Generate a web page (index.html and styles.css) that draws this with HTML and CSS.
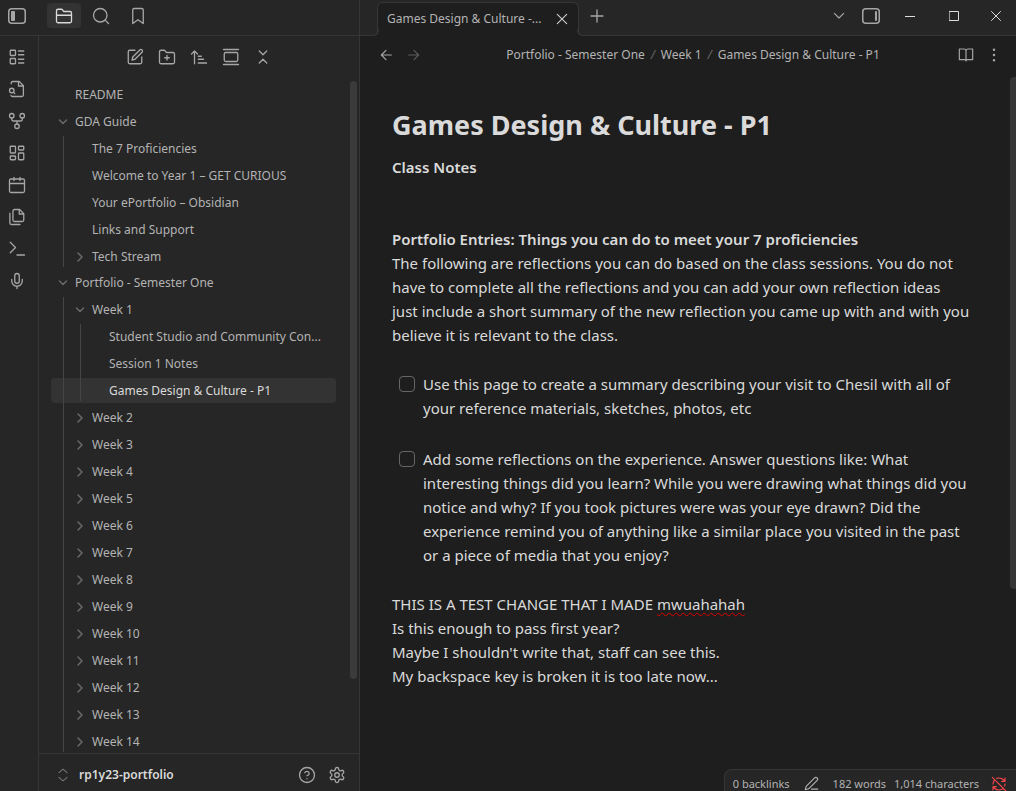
FILE: index.html
```html
<!DOCTYPE html>
<html lang="en">
<head>
<meta charset="utf-8">
<meta name="viewport" content="width=device-width, initial-scale=1">
<title>Games Design &amp; Culture - P1</title>
<link rel="stylesheet" href="styles.css">
</head>
<body>
<svg class="sprite" aria-hidden="true">
  <symbol id="panel-left" viewBox="0 0 18 16"><rect x="0.75" y="0.75" width="16.5" height="14.5" rx="3"/><rect class="solid" x="3" y="3" width="4" height="10" rx="1"/></symbol>
  <symbol id="panel-right" viewBox="0 0 18 16"><rect x="0.75" y="0.75" width="16.5" height="14.5" rx="3"/><rect class="solid" x="13" y="3" width="2" height="10" rx="1"/></symbol>
  <symbol id="folder" viewBox="0 0 24 24"><path d="M2 19V5a2 2 0 0 1 2-2h4.500a2 2 0 0 1 1.600.8L11.500 6H20a2 2 0 0 1 2 2v11a2 2 0 0 1-2 2H4a2 2 0 0 1-2-2zM2 11h20"/></symbol>
  <symbol id="search" viewBox="0 0 24 24"><circle cx="11" cy="11" r="9"/><path d="m22 22-4.500-4.500"/></symbol>
  <symbol id="bookmark" viewBox="0 0 24 24"><path d="m19 22-7-5-7 5V4a2 2 0 0 1 2-2h10a2 2 0 0 1 2 2z"/></symbol>
  <symbol id="layout-list" viewBox="0 0 24 24"><rect x="3" y="3" width="7" height="7" rx="1"/><rect x="3" y="14" width="7" height="7" rx="1"/><path d="M14 4h7M14 9h7M14 15h7M14 20h7"/></symbol>
  <symbol id="file-search" viewBox="0 0 24 24"><path d="M4.300 5V4a2 2 0 0 1 2-2H15l5.500 5.500V20a2 2 0 0 1-2 2H6a2 2 0 0 1-2-1.500M14 2v6h6.500"/><circle cx="5" cy="14" r="3"/><path d="m9 18-1.500-1.500"/></symbol>
  <symbol id="fork" viewBox="0 0 24 24"><circle cx="12" cy="19" r="3"/><circle cx="5" cy="5" r="3"/><circle cx="19" cy="5" r="3"/><path d="M5 8v1.500A2.500 2.500 0 0 0 7.500 12h9A2.500 2.500 0 0 0 19 9.500V8M12 12v4"/></symbol>
  <symbol id="dashboard" viewBox="0 0 24 24"><rect x="3" y="3" width="7" height="9" rx="1"/><rect x="14" y="3" width="7" height="5" rx="1"/><rect x="14" y="12" width="7" height="9" rx="1"/><rect x="3" y="16" width="7" height="5" rx="1"/></symbol>
  <symbol id="calendar" viewBox="0 0 24 24"><rect x="2" y="4" width="20" height="18" rx="2"/><path d="M8 2v4M16 2v4M2 10h20"/></symbol>
  <symbol id="files" viewBox="0 0 24 24"><path d="M15.500 2H8.600a2 2 0 0 0-2 2v12a2 2 0 0 0 2 2H19a2 2 0 0 0 2-2V7.500zM15 2v6h6M2.500 7v13a2 2 0 0 0 2 2H16"/></symbol>
  <symbol id="terminal" viewBox="0 0 24 24"><path d="m3 17 7-7-7-7M12 20h10"/></symbol>
  <symbol id="mic" viewBox="0 0 24 24"><path d="M12 2a3 3 0 0 0-3 3v7a3 3 0 0 0 6 0V5a3 3 0 0 0-3-3zM19 10v2a7 7 0 0 1-14 0v-2M12 19v3"/></symbol>
  <symbol id="edit" viewBox="0 0 24 24"><path d="M12 3H5a2 2 0 0 0-2 2v14a2 2 0 0 0 2 2h14a2 2 0 0 0 2-2v-7M18.400 2.600a2.100 2.100 0 1 1 3 3L12 15l-4 1 1-4z"/></symbol>
  <symbol id="folder-plus" viewBox="0 0 24 24"><path d="M12 10v6M9 13h6M20 21a2 2 0 0 0 2-2V8a2 2 0 0 0-2-2h-7.900a2 2 0 0 1-1.700-.9L9.600 3.900A2 2 0 0 0 7.900 3H4a2 2 0 0 0-2 2v14a2 2 0 0 0 2 2z"/></symbol>
  <symbol id="sort" viewBox="0 0 24 24"><path d="m2 8 4-4 4 4M6 4v17M11 11h4M11 15h7M11 20h11"/></symbol>
  <symbol id="gallery" viewBox="0 0 24 24"><path d="M2 2h20M2 22h20"/><rect x="3" y="6" width="18" height="12" rx="2"/></symbol>
  <symbol id="collapse" viewBox="0 0 24 24"><path d="m7 20 5-5 5 5M7 4l5 5 5-5"/></symbol>
  <symbol id="down" viewBox="0 0 24 24"><path d="m5 8 7 7 7-7"/></symbol>
  <symbol id="right" viewBox="0 0 24 24"><path d="m8 4 8 8-8 8"/></symbol>
  <symbol id="up-down" viewBox="0 0 24 24"><path d="m5 16 7 6 7-6M5 8l7-6 7 6"/></symbol>
  <symbol id="help" viewBox="0 0 24 24"><circle cx="12" cy="12" r="10"/><path d="M9.100 9a3 3 0 0 1 5.800 1c0 2-3 3-3 3M12 17v.1"/></symbol>
  <symbol id="gear" viewBox="0 0 24 24"><path d="M12.220 2h-.44a2 2 0 0 0-2 2v.18a2 2 0 0 1-1 1.730l-.43.25a2 2 0 0 1-2 0l-.15-.08a2 2 0 0 0-2.730.73l-.22.38a2 2 0 0 0 .73 2.730l.15.1a2 2 0 0 1 1 1.720v.51a2 2 0 0 1-1 1.740l-.15.09a2 2 0 0 0-.73 2.730l.22.38a2 2 0 0 0 2.730.73l.15-.08a2 2 0 0 1 2 0l.43.25a2 2 0 0 1 1 1.730V20a2 2 0 0 0 2 2h.44a2 2 0 0 0 2-2v-.18a2 2 0 0 1 1-1.730l.43-.25a2 2 0 0 1 2 0l.15.08a2 2 0 0 0 2.730-.73l.22-.39a2 2 0 0 0-.73-2.730l-.15-.08a2 2 0 0 1-1-1.740v-.5a2 2 0 0 1 1-1.740l.15-.09a2 2 0 0 0 .73-2.730l-.22-.38a2 2 0 0 0-2.730-.73l-.15.08a2 2 0 0 1-2 0l-.43-.25a2 2 0 0 1-1-1.730V4a2 2 0 0 0-2-2z"/><circle cx="12" cy="12" r="3"/></symbol>
  <symbol id="close" viewBox="0 0 24 24"><path d="M5 5l14 14M19 5 5 19"/></symbol>
  <symbol id="plus" viewBox="0 0 24 24"><path d="M12 4v16M4 12h16"/></symbol>
  <symbol id="minimize" viewBox="0 0 10 10"><path d="M0 5.500h10"/></symbol>
  <symbol id="maximize" viewBox="0 0 10 10"><path d="M.5.500h9v9h-9z"/></symbol>
  <symbol id="window-close" viewBox="0 0 10 10"><path d="m.5.500 9 9M9.500.500l-9 9"/></symbol>
  <symbol id="arrow-left" viewBox="0 0 24 24"><path d="m12 19-7-7 7-7M20 12H5"/></symbol>
  <symbol id="arrow-right" viewBox="0 0 24 24"><path d="m12 5 7 7-7 7M4 12h15"/></symbol>
  <symbol id="book" viewBox="0 0 24 24"><path d="M12 6a3 3 0 0 0-3-3H2v16h8a2 2 0 0 1 2 2 2 2 0 0 1 2-2h8V3h-7a3 3 0 0 0-3 3zv15"/></symbol>
  <symbol id="more" viewBox="0 0 24 24"><circle cx="12" cy="4" r="1"/><circle cx="12" cy="12" r="1"/><circle cx="12" cy="20" r="1"/></symbol>
  <symbol id="pen" viewBox="0 0 24 24"><path d="M12 21h10M17 3a2.800 2.800 0 0 1 4 4L7.500 20.500 2 22l1.500-5.500z"/></symbol>
  <symbol id="sync-off" viewBox="0 0 24 24"><path d="M21 8 18.700 5.700A10 10 0 0 0 12 3c-1.200 0-2.300.200-3.400.6M21 12c0 1-.2 2-.5 3M21 3v5h-5M3 16l2.300 2.300A10 10 0 0 0 12 21c2.500 0 4.800-.9 6.400-2.400M3 12c0-2.500.9-4.800 2.600-6.400M8 16H3v5M2 2l20 20"/></symbol>
</svg>

<div class="app">
  <aside class="left">
    <div class="left-top">
      <button class="btn panel-toggle" aria-label="Collapse sidebar"><svg class="panel"><use href="#panel-left"/></svg></button>
      <nav class="side-tabs">
        <button class="btn side-tab active" aria-label="Files"><svg><use href="#folder"/></svg></button>
        <button class="btn side-tab" aria-label="Search"><svg><use href="#search"/></svg></button>
        <button class="btn side-tab" aria-label="Bookmarks"><svg><use href="#bookmark"/></svg></button>
      </nav>
    </div>
    <div class="left-body">
      <nav class="ribbon">
        <button class="btn" aria-label="Outline"><svg><use href="#layout-list"/></svg></button>
        <button class="btn" aria-label="Quick switcher"><svg><use href="#file-search"/></svg></button>
        <button class="btn" aria-label="Graph view"><svg><use href="#fork"/></svg></button>
        <button class="btn" aria-label="Canvas"><svg><use href="#dashboard"/></svg></button>
        <button class="btn" aria-label="Daily note"><svg><use href="#calendar"/></svg></button>
        <button class="btn" aria-label="Templates"><svg><use href="#files"/></svg></button>
        <button class="btn" aria-label="Command palette"><svg><use href="#terminal"/></svg></button>
        <button class="btn" aria-label="Record audio"><svg><use href="#mic"/></svg></button>
      </nav>
      <div class="explorer">
        <div class="actions">
          <button class="btn" aria-label="New note"><svg><use href="#edit"/></svg></button>
          <button class="btn" aria-label="New folder"><svg><use href="#folder-plus"/></svg></button>
          <button class="btn" aria-label="Sort order"><svg><use href="#sort"/></svg></button>
          <button class="btn" aria-label="Reveal current file"><svg><use href="#gallery"/></svg></button>
          <button class="btn" aria-label="Collapse all"><svg><use href="#collapse"/></svg></button>
        </div>
        <div class="tree">
          <ul class="level">
            <li><a class="row" href="#">README</a></li>
            <li><a class="row" href="#"><svg><use href="#down"/></svg>GDA Guide</a>
              <ul class="level nested guide">
                <li><a class="row" href="#">The 7 Proficiencies</a></li>
                <li><a class="row" href="#">Welcome to Year 1 – GET CURIOUS</a></li>
                <li><a class="row" href="#">Your ePortfolio – Obsidian</a></li>
                <li><a class="row" href="#">Links and Support</a></li>
                <li><a class="row" href="#"><svg><use href="#right"/></svg>Tech Stream</a></li>
              </ul>
            </li>
            <li><a class="row" href="#"><svg><use href="#down"/></svg>Portfolio - Semester One</a>
              <ul class="level nested">
                <li><a class="row" href="#"><svg><use href="#down"/></svg>Week 1</a>
                  <ul class="level nested deep">
                    <li><a class="row" href="#">Student Studio and Community Con...</a></li>
                    <li><a class="row" href="#">Session 1 Notes</a></li>
                    <li><a class="row current" href="#">Games Design &amp; Culture - P1</a></li>
                  </ul>
                </li>
                <li><a class="row" href="#"><svg><use href="#right"/></svg>Week 2</a></li>
                <li><a class="row" href="#"><svg><use href="#right"/></svg>Week 3</a></li>
                <li><a class="row" href="#"><svg><use href="#right"/></svg>Week 4</a></li>
                <li><a class="row" href="#"><svg><use href="#right"/></svg>Week 5</a></li>
                <li><a class="row" href="#"><svg><use href="#right"/></svg>Week 6</a></li>
                <li><a class="row" href="#"><svg><use href="#right"/></svg>Week 7</a></li>
                <li><a class="row" href="#"><svg><use href="#right"/></svg>Week 8</a></li>
                <li><a class="row" href="#"><svg><use href="#right"/></svg>Week 9</a></li>
                <li><a class="row" href="#"><svg><use href="#right"/></svg>Week 10</a></li>
                <li><a class="row" href="#"><svg><use href="#right"/></svg>Week 11</a></li>
                <li><a class="row" href="#"><svg><use href="#right"/></svg>Week 12</a></li>
                <li><a class="row" href="#"><svg><use href="#right"/></svg>Week 13</a></li>
                <li><a class="row" href="#"><svg><use href="#right"/></svg>Week 14</a></li>
              </ul>
            </li>
          </ul>
          <div class="thumb tree-thumb"></div>
        </div>
        <footer class="vault">
          <button class="btn vault-name"><svg><use href="#up-down"/></svg>rp1y23-portfolio</button>
          <button class="btn" aria-label="Help"><svg><use href="#help"/></svg></button>
          <button class="btn" aria-label="Settings"><svg><use href="#gear"/></svg></button>
        </footer>
      </div>
    </div>
  </aside>

  <main class="main">
    <div class="tabbar">
      <div class="tab"><span class="tab-title">Games Design &amp; Culture -...</span><button class="btn tab-close" aria-label="Close tab"><svg><use href="#close"/></svg></button></div>
      <button class="btn new-tab" aria-label="New tab"><svg><use href="#plus"/></svg></button>
      <button class="btn tab-list" aria-label="Tab list"><svg><use href="#down"/></svg></button>
      <button class="btn panel-button" aria-label="Expand right sidebar"><svg class="panel"><use href="#panel-right"/></svg></button>
      <button class="btn window" aria-label="Minimize"><svg><use href="#minimize"/></svg></button>
      <button class="btn window" aria-label="Maximize"><svg><use href="#maximize"/></svg></button>
      <button class="btn window" aria-label="Close window"><svg><use href="#window-close"/></svg></button>
    </div>
    <header class="view-header">
      <div class="history">
        <button class="btn" aria-label="Back"><svg><use href="#arrow-left"/></svg></button>
        <button class="btn" aria-label="Forward" disabled><svg><use href="#arrow-right"/></svg></button>
      </div>
      <nav class="crumbs"><a href="#">Portfolio - Semester One</a><i>/</i><a href="#">Week 1</a><i>/</i><span>Games Design &amp; Culture - P1</span></nav>
      <div class="view-actions">
        <button class="btn" aria-label="Reading view"><svg><use href="#book"/></svg></button>
        <button class="btn" aria-label="More options"><svg><use href="#more"/></svg></button>
      </div>
    </header>
    <article class="note">
      <h1>Games Design &amp; Culture - P1</h1>
      <h2>Class Notes</h2>
      <h3>Portfolio Entries: Things you can do to meet your 7 proficiencies</h3>
      <p>The following are reflections you can do based on the class sessions. You do not<br>have to complete all the reflections and you can add your own reflection ideas<br>just include a short summary of the new reflection you came up with and with you<br>believe it is relevant to the class.</p>
      <div class="tasks">
        <div class="task"><input type="checkbox" id="task-1"><label for="task-1">Use this page to create a summary describing your visit to Chesil with all of<br>your reference materials, sketches, photos, etc</label></div>
        <div class="task"><input type="checkbox" id="task-2"><label for="task-2">Add some reflections on the experience. Answer questions like: What<br>interesting things did you learn? While you were drawing what things did you<br>notice and why? If you took pictures were was your eye drawn? Did the<br>experience remind you of anything like a similar place you visited in the past<br>or a piece of media that you enjoy?</label></div>
      </div>
      <p>THIS IS A TEST CHANGE THAT I MADE <span class="misspelled">mwuahahah</span><br>Is this enough to pass first year?<br>Maybe I shouldn't write that, staff can see this.<br>My backspace key is broken it is too late now...</p>
    </article>
    <div class="thumb note-thumb"></div>
    <footer class="status">
      <span>0 backlinks</span>
      <svg class="pen"><use href="#pen"/></svg>
      <span>182 words</span>
      <span>1,014 characters</span>
      <svg class="sync"><use href="#sync-off"/></svg>
    </footer>
  </main>
</div>
</body>
</html>
```

FILE: styles.css
```css
:root {
  --bg: #1e1e1e;
  --bg-side: #262626;
  --line: #363636;
  --hover: #333333;
  --text: #dadada;
  --muted: #b3b3b3;
  --icon: #a6a6a6;
  --faint: #666666;
}

* { box-sizing: border-box; }

body {
  margin: 0;
  background: var(--bg);
  color: var(--text);
  font: 12px/16px "Noto Sans", "Open Sans", sans-serif;
}

svg {
  width: 18px;
  height: 18px;
  flex: none;
  fill: none;
  stroke: currentColor;
  stroke-width: 1.75;
  stroke-linecap: round;
  stroke-linejoin: round;
}

.sprite { display: none; }
.solid { fill: currentColor; stroke: none; }
.panel { width: 18px; height: 16px; stroke-width: 1.5; }

a { color: inherit; text-decoration: none; }

.btn {
  display: flex;
  align-items: center;
  justify-content: center;
  padding: 0;
  border: 0;
  background: none;
  color: var(--icon);
  font: inherit;
}

.app { display: flex; height: 100vh; overflow: hidden; }

/* Left side */
.left {
  display: flex;
  flex-direction: column;
  flex: none;
  width: 360px;
  background: var(--bg-side);
  border-right: 1px solid var(--line);
}

.left-top {
  display: flex;
  flex: none;
  height: 36px;
  border-bottom: 1px solid var(--line);
}

.panel-toggle { width: 34px; height: 32px; }
.side-tabs { display: flex; gap: 3px; padding: 3px 0 0 13px; }
.side-tab { width: 34px; height: 25px; border-radius: 4px; }
.side-tab.active { background: var(--hover); color: var(--text); }

.left-body { display: flex; flex: 1; min-height: 0; }

.ribbon {
  display: flex;
  flex-direction: column;
  flex: none;
  gap: 6px;
  width: 39px;
  padding: 8px 4px;
  border-right: 1px solid var(--line);
}
.ribbon .btn { width: 26px; height: 26px; }

.explorer { display: flex; flex: 1; flex-direction: column; min-width: 0; }
.actions { display: flex; flex: none; justify-content: center; gap: 6px; padding: 8px 0; }
.actions .btn { width: 26px; height: 26px; }

.tree {
  position: relative;
  flex: 1;
  min-height: 0;
  overflow: hidden;
  padding: 4px 23px 0 12px;
}

.level { margin: 0; padding: 0; list-style: none; }
.nested { position: relative; }
.nested::before {
  content: "";
  position: absolute;
  z-index: 1;
  top: 0;
  bottom: 2px;
  left: 12px;
  width: 1px;
  background: #454545;
}
.deep::before { left: 29px; }
.guide { margin-bottom: -1px; }

.row {
  position: relative;
  display: flex;
  align-items: center;
  height: 25px;
  margin-bottom: 2px;
  padding-left: 24px;
  border-radius: 4px;
  color: var(--muted);
  white-space: nowrap;
}
.nested .row { padding-left: 41px; }
.deep .row { padding-left: 58px; }
.row svg {
  width: 12px;
  height: 12px;
  margin: 0 6px 0 -18px;
  color: #6a6a6a;
  stroke-width: 3;
}
.row.current { background: var(--hover); color: var(--text); }

.thumb { position: absolute; border-radius: 4px; background: #3b3b3b; }
.tree-thumb { top: 3px; right: 2px; bottom: 74px; width: 7px; }

.vault {
  display: flex;
  flex: none;
  align-items: center;
  gap: 4px;
  height: 38px;
  padding: 5px 9px 0 17px;
  border-top: 1px solid var(--line);
}
.vault .btn { width: 26px; height: 26px; }
.vault .vault-name {
  flex: 1;
  justify-content: flex-start;
  gap: 9px;
  color: var(--text);
  font-weight: 600;
}
.vault-name svg { width: 14px; height: 14px; color: #777777; }

/* Main side */
.main {
  position: relative;
  display: flex;
  flex: 1;
  flex-direction: column;
  min-width: 0;
}

.tabbar {
  display: flex;
  flex: none;
  align-items: center;
  height: 36px;
  padding: 0 0 3px 17px;
  background: var(--bg-side);
  border-bottom: 1px solid var(--line);
}

.tab {
  position: relative;
  display: flex;
  align-items: center;
  align-self: flex-start;
  flex: none;
  width: 202px;
  height: 34px;
  margin-top: 2px;
  padding: 0 6px 2px 9px;
  border: 1px solid var(--line);
  border-bottom: 0;
  border-radius: 6px 6px 0 0;
  background: var(--bg);
}
.tab::before,
.tab::after {
  content: "";
  position: absolute;
  bottom: 0;
  width: 6px;
  height: 6px;
  border: solid var(--line);
}
.tab::before { left: -6px; border-width: 0 1px 1px 0; border-radius: 0 0 6px 0; box-shadow: 2px 2px 0 var(--bg); }
.tab::after { right: -6px; border-width: 0 0 1px 1px; border-radius: 0 0 0 6px; box-shadow: -2px 2px 0 var(--bg); }
.tab-title { flex: 1; color: var(--muted); white-space: nowrap; }
.tab-close { width: 20px; height: 20px; color: #cccccc; }
.tab-close svg { width: 16px; height: 16px; }
.new-tab { width: 36px; height: 32px; }
.tab-list { width: 30px; height: 32px; margin-left: auto; }
.tab-list svg { width: 16px; height: 16px; }
.panel-button { width: 34px; height: 32px; }
.window { width: 44px; height: 32px; }
.window:last-child { width: 40px; }
.window svg { width: 10px; height: 10px; stroke-width: 1; color: #dddddd; }

.view-header {
  display: grid;
  flex: none;
  grid-template-columns: 60px 1fr 54px;
  align-items: center;
  height: 38px;
  padding: 0 9px 0 13px;
}
.history, .view-actions { display: flex; gap: 2px; }
.history .btn, .view-actions .btn { width: 26px; height: 26px; }
.history svg, .view-actions svg { width: 16px; height: 16px; }
.history .btn:disabled { color: #5a5a5a; }
.crumbs { display: flex; justify-content: center; color: var(--muted); white-space: nowrap; }
.crumbs i { width: 16px; color: var(--faint); text-align: center; }

.note {
  flex: 1;
  padding: 31px 32px 0;
  font-size: 15px;
  line-height: 24px;
  white-space: nowrap;
}
.note h1 { margin: 0; font-size: 27px; font-weight: 700; line-height: 40px; }
.note h2, .note h3 { margin: 0; font-size: 15px; font-weight: 600; line-height: 24px; }
.note h2 { margin: 10px 0 48px; }
.note p { margin: 0; }
.tasks { display: grid; gap: 27px; padding: 25px 0; }
.task { display: flex; align-items: flex-start; gap: 8px; padding-left: 7px; }
.task input {
  flex: none;
  appearance: none;
  width: 16px;
  height: 16px;
  margin: 4px 0 0;
  border: 1px solid var(--faint);
  border-radius: 4px;
}
.misspelled {
  text-decoration: underline wavy #e00000 1px;
  text-decoration-skip-ink: none;
  text-underline-offset: 2px;
}

.note-thumb { top: 77px; right: 0; bottom: 202px; width: 6px; border-radius: 4px 0 0 4px; background: #363636; }

.status {
  position: absolute;
  right: 0;
  bottom: 0;
  display: flex;
  align-items: center;
  gap: 8px;
  height: 22px;
  padding: 6px 9px 0 8px;
  border: solid var(--line);
  border-width: 1px 0 0 1px;
  border-radius: 8px 0 0 0;
  background: var(--bg-side);
  color: var(--muted);
  font-size: 11px;
  white-space: nowrap;
}
.pen { width: 15px; height: 15px; margin: 0 6px; }
.sync { width: 16px; height: 16px; margin-left: 4px; color: #fb464c; }
```
